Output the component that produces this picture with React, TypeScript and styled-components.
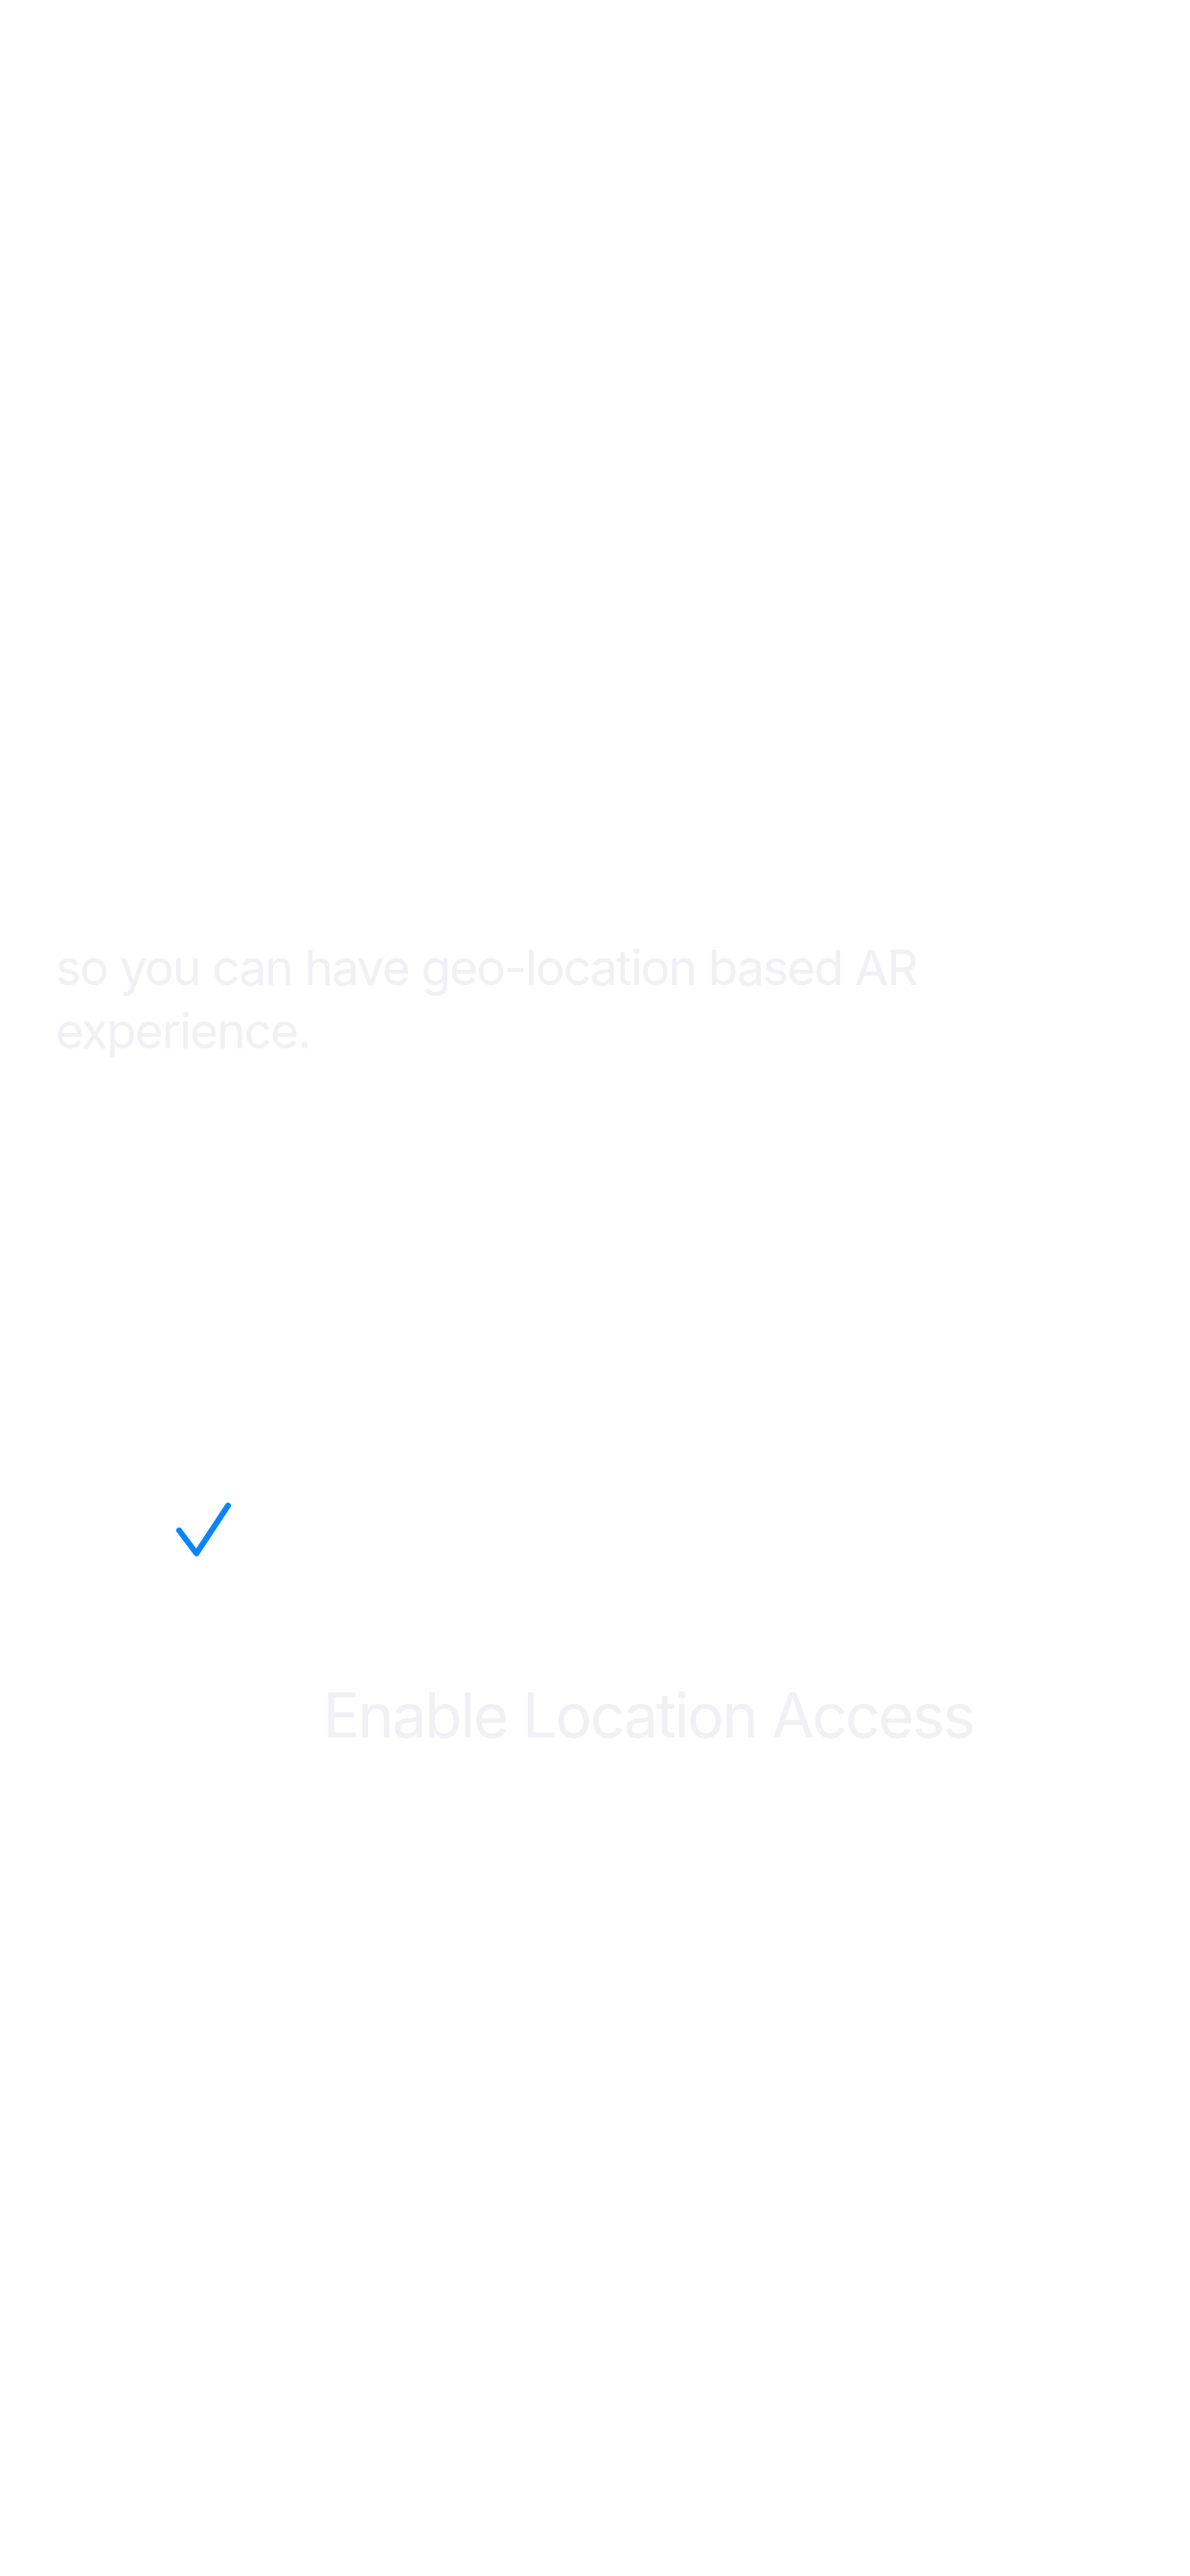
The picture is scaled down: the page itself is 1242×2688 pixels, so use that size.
import React from "react";
import styled, { createGlobalStyle } from "styled-components";

const GlobalStyle = createGlobalStyle`
  html, body {
    margin: 0;
    padding: 0;
    background: #ffffff;
  }
  body {
    font-family: "Inter", "Noto Sans", sans-serif;
  }
`;

export default function App() {
  return (
    <>
      <GlobalStyle />
      <Screen>
        <Description>
          so you can have geo-location based AR experience.
        </Description>
        <CheckRow>
          <CheckIcon viewBox="0 0 60 60">
            <path d="M5 31 L23 55 L56 5" />
          </CheckIcon>
        </CheckRow>
        <EnableButton type="button">Enable Location Access</EnableButton>
      </Screen>
    </>
  );
}

const Screen = styled.main`
  min-height: 2688px;
  box-sizing: border-box;
  display: flex;
  flex-direction: column;
  align-items: flex-start;
  padding: 977px 58px 0;
  background: #ffffff;
`;

const Description = styled.p`
  margin: 0;
  width: 960px;
  font-size: 51px;
  line-height: 66px;
  letter-spacing: -1.6px;
  font-weight: 400;
  color: #f0f0f5;
`;

const CheckRow = styled.div`
  display: flex;
  align-items: center;
  margin-top: 457px;
  padding-left: 124px;
`;

const CheckIcon = styled.svg`
  width: 60px;
  height: 60px;
  fill: none;
  stroke: #0a84ff;
  stroke-width: 6;
  stroke-linecap: round;
  stroke-linejoin: round;
`;

const EnableButton = styled.button`
  margin: 124px 0 0 279px;
  padding: 0;
  border: none;
  background: none;
  font-family: "Inter", "Noto Sans", sans-serif;
  font-size: 64px;
  line-height: 80px;
  letter-spacing: -2px;
  font-weight: 400;
  color: #f0f0f5;
  cursor: pointer;
`;
